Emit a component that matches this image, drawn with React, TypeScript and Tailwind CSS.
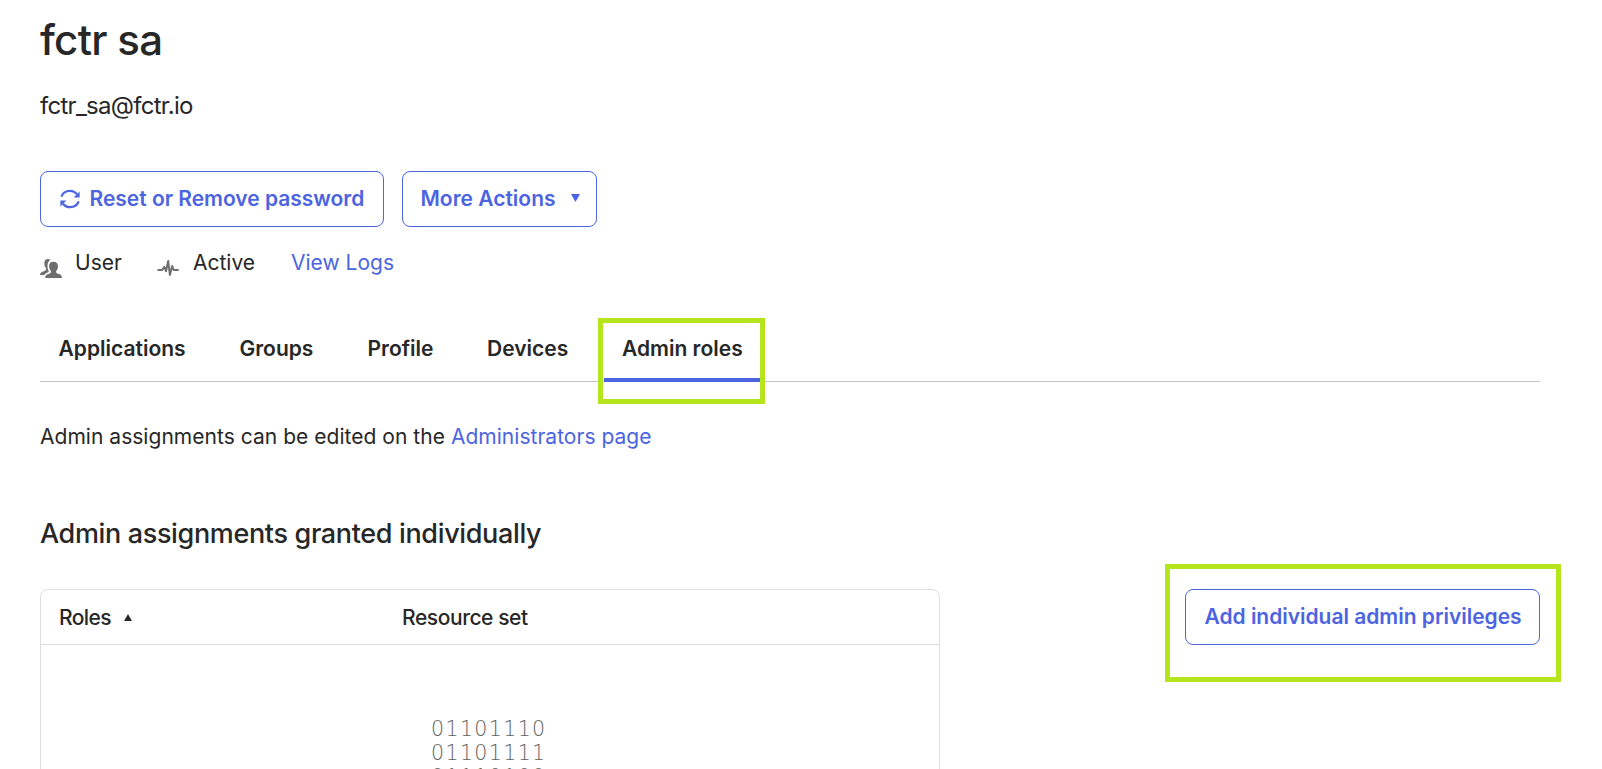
import React from "react";

const TABS = [
  { label: "Applications", box: "w-[181px]" },
  { label: "Groups", box: "w-[128px]" },
  { label: "Profile", box: "w-[119.500px]" },
  { label: "Devices", box: "w-[117px]" },
];

const BITS = ["01101110", "01101111", "01110100"];

const RefreshIcon = () => (
  <svg className="h-5 w-5 shrink-0" viewBox="0 0 20 20" fill="none" stroke="currentColor" strokeWidth="2.300">
    <path d="M1.300 7.600C2.800 3.900 6 1.800 9.800 1.800c3 0 5.400 1.200 7.200 3.500" />
    <path d="M18.700 12.400C17.200 16.100 14 18.200 10.200 18.200c-3 0-5.400-1.200-7.200-3.500" />
    <path d="M19.600 2.600v5.800h-6z" fill="currentColor" stroke="none" />
    <path d="M.4 17.400v-5.800h6z" fill="currentColor" stroke="none" />
  </svg>
);

const PeopleIcon = () => (
  <svg className="h-[19px] w-[22px] shrink-0" viewBox="0 0 22 19" fill="#6e6e6e">
    <path d="M10.500.8C9.600.2 8.900 0 8 0 5.500 0 4.200 1.700 4.300 4.200c0 2.400.9 4 1.900 5.300 0 1.600-.6 2.100-2.400 2.800C1.300 13.200.2 13.800 0 16h4.200c.8-1.400 1.900-1.900 4.100-2.800l.6-.4C8 11 7.400 8.900 7.500 6.800 7.600 4.100 8.500 1.900 10.500.8z" />
    <path d="M13.300 2.700C10.400 2.700 9 4.500 9.100 7.200c.1 2.200.8 3.900 1.900 5 .2 1.700-.5 2.100-2.600 2.900C6.300 15.900 5.300 16.500 5.200 19H22c-.1-2.500-1.100-3.100-3.200-3.900-2.200-.8-2.900-1.200-2.700-2.900 1.100-1.100 1.800-2.800 1.900-5 .1-2.700-1.500-4.500-4.700-4.500z" />
  </svg>
);

const PulseIcon = () => (
  <svg className="h-[18px] w-[22px] shrink-0" viewBox="0 0 22 18" fill="none" stroke="#6e6e6e" strokeWidth="2" strokeLinejoin="round">
    <path d="M.5 11h4.700l2.100-3.200 1.700 4.400L11.200 2l1.700 14 2.300-9 1.500 4h5" />
  </svg>
);

export default function App() {
  return (
    <main className="h-[769px] w-[1602px] overflow-hidden bg-white pl-10 pr-[62px] font-['Inter',sans-serif] text-[#272727]">
      <h1 className="flex h-[79px] items-center text-[42px] font-medium tracking-[-0.7px] whitespace-nowrap">fctr sa</h1>
      <p className="mt-[5px] flex h-11 items-center text-2xl tracking-[-0.72px] whitespace-nowrap">fctr_sa@fctr.io</p>

      <div className="mt-[43px] flex gap-[18px] text-[21px] font-semibold text-[#4c64e1]">
        <button className="flex h-14 w-[344px] items-center rounded-lg border border-current pl-[19px] whitespace-nowrap">
          <RefreshIcon />
          <span className="ml-[9.500px] tracking-[-0.020px]">Reset or Remove password</span>
        </button>
        <button className="flex h-14 w-[195px] items-center rounded-lg border border-current pl-[17.500px] whitespace-nowrap">
          <span>More Actions</span>
          <svg className="ml-auto mr-4 mb-[3px] h-2 w-[9px]" viewBox="0 0 9 8" fill="currentColor"><path d="M0 0h9L4.500 8z" /></svg>
        </button>
      </div>

      <div className="mt-[21px] flex h-[30px] items-center text-[21px] whitespace-nowrap">
        <span className="flex w-[117px] items-center"><span className="mt-2.5"><PeopleIcon /></span><span className="ml-[13px]">User</span></span>
        <span className="flex w-[134px] items-center"><span className="mt-[9px]"><PulseIcon /></span><span className="ml-3.5">Active</span></span>
        <a className="text-[#4c64e1]">View Logs</a>
      </div>

      <nav className="mt-10 flex h-[64px] border-b border-[#c4c4c4] pl-[18.500px] text-[21px] font-semibold whitespace-nowrap">
        {TABS.map((t) => (
          <a key={t.label} className={`shrink-0 pt-[15px] ${t.box}`}>{t.label}</a>
        ))}
        <a className="relative h-16 w-[156px] shrink-0 border-b-4 border-[#4c64e1] pt-[15px] pl-[18px]">
          Admin roles
          <span className="absolute top-0 -left-[6px] h-[86px] w-[167px] border-[5px] border-[#b5e61d]" />
        </a>
      </nav>

      <p className="mt-10 flex h-[30px] items-center text-[21px] tracking-[0.030px] whitespace-pre">
        <span>Admin assignments can be edited on the </span>
        <a className="text-[#4c64e1]">Administrators page</a>
      </p>

      <h2 className="mt-[62px] flex h-10 items-center text-[27px] font-medium tracking-[-0.350px] whitespace-nowrap">Admin assignments granted individually</h2>

      <section className="mt-[35px] flex items-start justify-between">
        <div className="h-[200px] w-[900px] rounded-t-lg border border-[#dedede]">
          <div className="flex h-[55px] items-center border-b border-[#dedede] pt-0.5 pl-[18px] text-[21px] font-medium whitespace-nowrap">
            <span className="flex w-[343px] items-center">
              <span className="tracking-[-0.6px]">Roles</span>
              <svg className="ml-[13px] mb-0.5 h-[7px] w-2" viewBox="0 0 8 7" fill="#272727"><path d="M0 7h8L4 0z" /></svg>
            </span>
            <span className="tracking-[-0.430px]">Resource set</span>
          </div>
          <div className="pt-[71.500px] pl-[390px] font-['DejaVu_Sans',sans-serif] text-[20.500px] leading-6 font-extralight tracking-[1.400px] text-[#606060]">
            {BITS.map((b) => <div key={b}>{b}</div>)}
          </div>
        </div>
        <button className="relative flex h-14 w-[355px] items-center rounded-lg border border-current pl-[18.500px] text-[21px] font-semibold tracking-[-0.020px] whitespace-nowrap text-[#4c64e1]">
          Add individual admin privileges
          <span className="absolute -top-[26px] -left-[21px] h-[118px] w-[396px] border-[5px] border-[#b5e61d]" />
        </button>
      </section>
    </main>
  );
}
